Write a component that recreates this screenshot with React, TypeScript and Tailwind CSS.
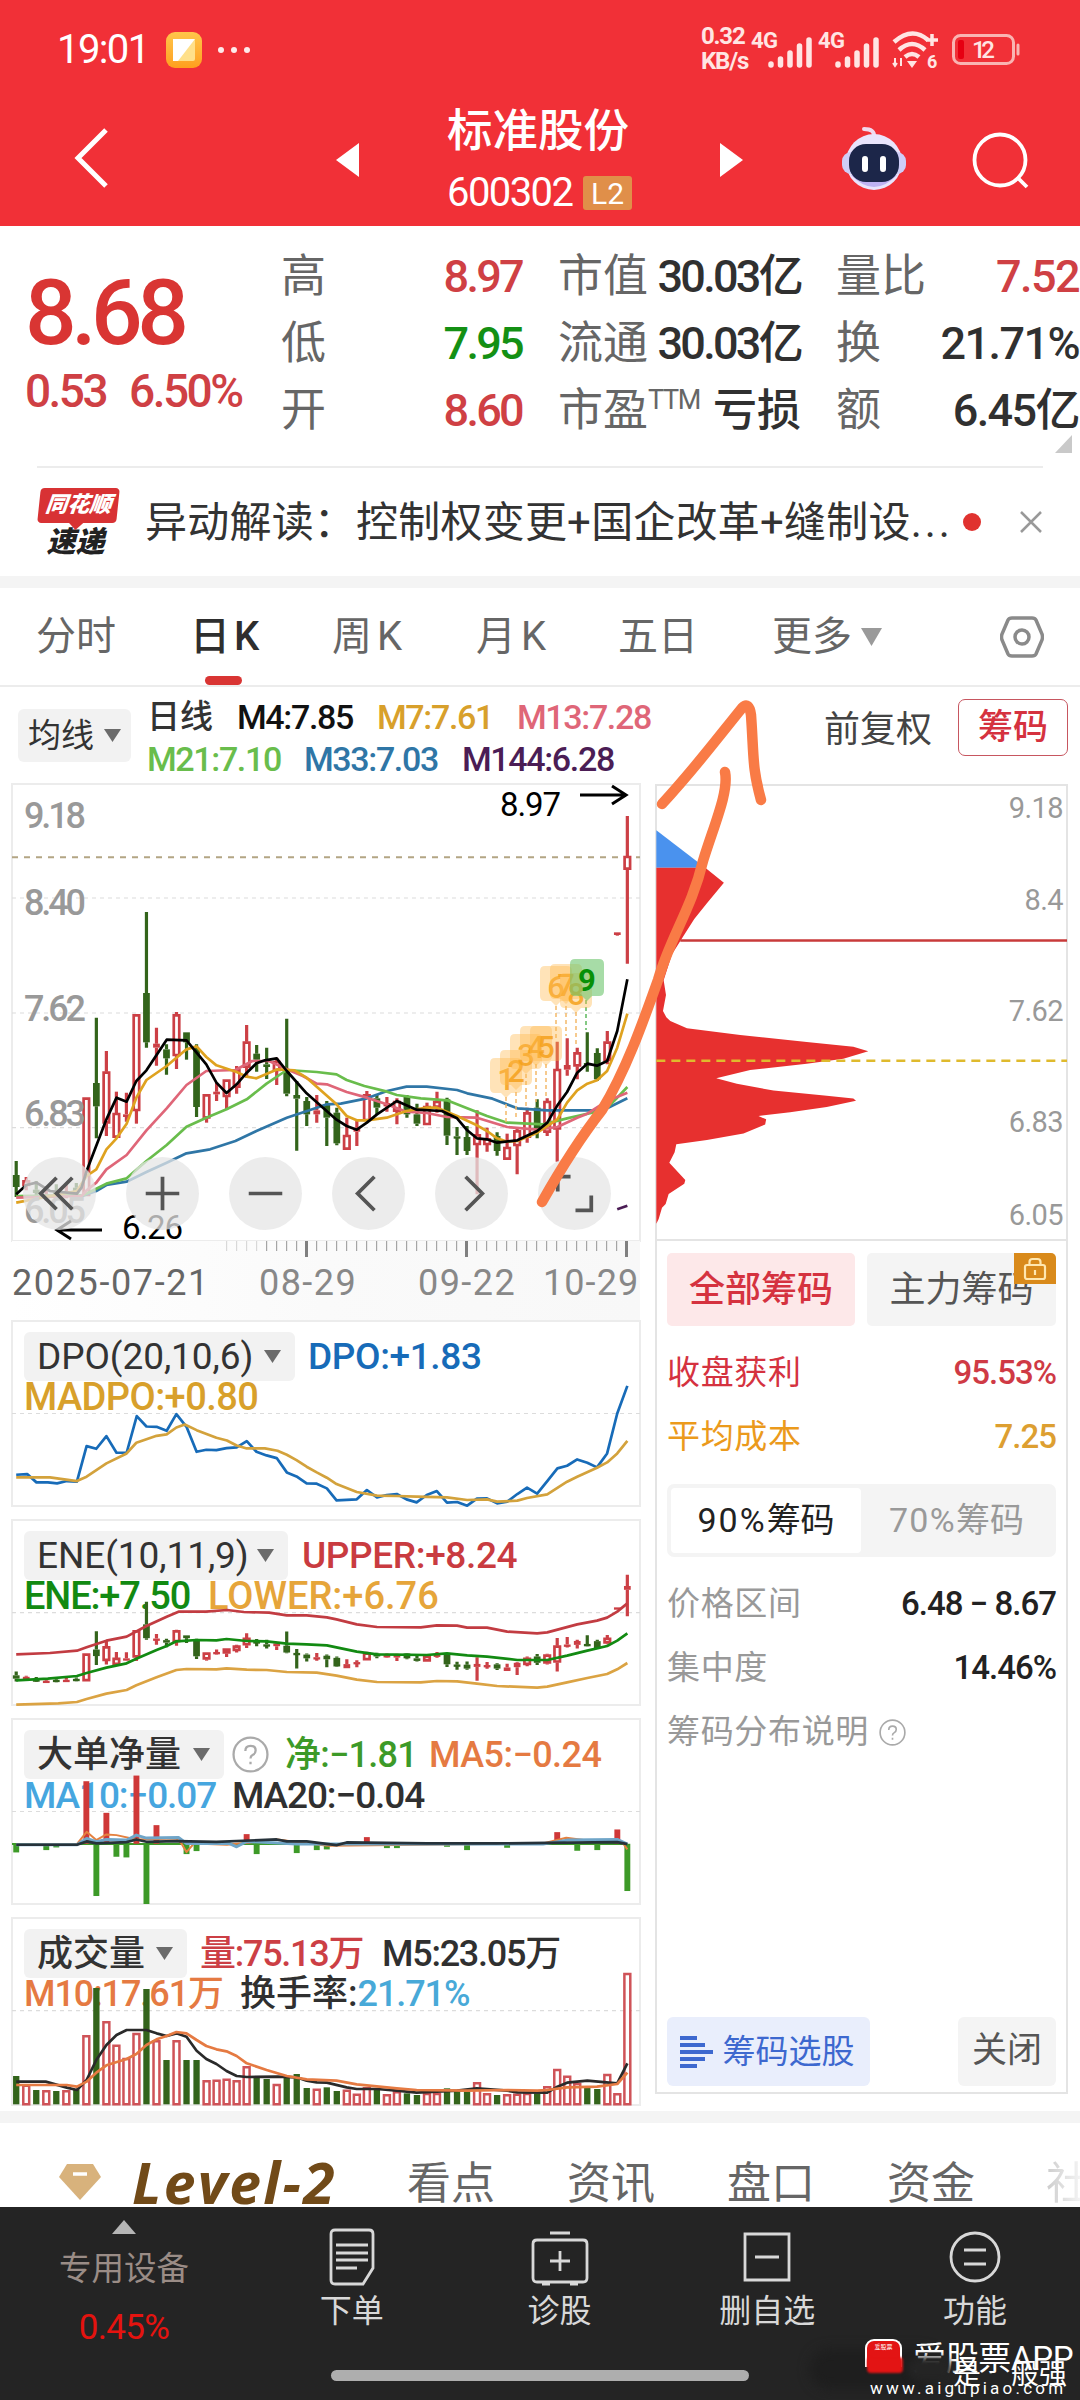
/**
 * Stock detail screen
 * Quote header, daily K chart with sub indicators and the chip distribution panel
 * @file App.tsx
 */

import React, { FC, ReactNode } from 'react';

type Candle = [kind: 'r' | 'g', high: number, top: number, bottom: number, low: number];

// One entry per trading day, in chart units (downwards)
const CANDLES: Candle[] = [
  ['g', 780, 822, 858, 888], ['r', 828, 838, 855, 868], ['g', 840, 866, 876, 890], ['r', 856, 880, 892, 900],
  ['g', 850, 870, 885, 896], ['r', 852, 870, 882, 892], ['g', 846, 860, 872, 886], ['r', 590, 590, 885, 885],
  ['g', 350, 546, 616, 712], ['r', 450, 512, 667, 705], ['r', 572, 636, 710, 710], ['r', 575, 640, 648, 662],
  ['r', 340, 340, 630, 668], ['g', 33, 276, 424, 440], ['r', 380, 428, 440, 494], ['g', 430, 445, 472, 521],
  ['r', 333, 340, 465, 504], ['g', 394, 394, 424, 476], ['g', 430, 447, 618, 648], ['r', 580, 580, 652, 665],
  ['r', 545, 572, 580, 600], ['r', 536, 536, 588, 626], ['r', 495, 505, 560, 578], ['r', 372, 422, 500, 530],
  ['g', 432, 458, 476, 512], ['g', 440, 490, 498, 534], ['r', 470, 480, 510, 552], ['g', 353, 505, 578, 586],
  ['g', 540, 582, 593, 749], ['g', 588, 600, 640, 675], ['r', 582, 628, 640, 665], ['g', 600, 612, 650, 735],
  ['g', 620, 635, 727, 733], ['r', 650, 702, 746, 746], ['r', 660, 680, 692, 735], ['r', 570, 580, 660, 660],
  ['g', 580, 592, 620, 640], ['r', 588, 606, 616, 632], ['r', 592, 600, 632, 670], ['g', 582, 588, 640, 650],
  ['g', 608, 640, 668, 675], ['r', 605, 615, 672, 672], ['r', 572, 600, 620, 635], ['g', 590, 595, 704, 732],
  ['g', 678, 706, 710, 762], ['g', 675, 708, 750, 762], ['r', 628, 700, 732, 880], ['r', 680, 712, 732, 752],
  ['g', 694, 705, 750, 764], ['r', 698, 738, 776, 776], ['r', 680, 688, 735, 820], ['r', 620, 634, 710, 725],
  ['g', 595, 620, 688, 712], ['r', 592, 600, 695, 705], ['r', 422, 504, 685, 782], ['r', 412, 492, 506, 524],
  ['r', 440, 454, 496, 535], ['g', 394, 486, 490, 512], ['g', 442, 456, 535, 540], ['r', 390, 422, 480, 490],
  ['r', 94, 94, 102, 104], ['r', -255, -135, -94, 188],
];

const VOLUMES = [
  1128, 1155, 1170, 1172, 1173, 1172, 1168, 1007, 864, 965, 1035, 1075, 1000, 867, 1022, 1080, 1022, 1080, 1080, 1142,
  1140, 1137, 1142, 1100, 1130, 1137, 1153, 1130, 1122, 1164, 1167, 1162, 1173, 1170, 1182, 1163, 1170, 1184, 1175,
  1180, 1185, 1180, 1180, 1165, 1175, 1175, 1148, 1181, 1185, 1184, 1182, 1180, 1180, 1160, 1108, 1128, 1150, 1162,
  1167, 1123, 1181, 820,
];

// [day, bar end] for days with a visible net order bar
const NET_BARS: [number, number][] = [
  [0, 457], [3, 450], [4, 442], [7, 243], [8, 588], [9, 338], [10, 470], [11, 472], [12, 226], [13, 612], [14, 375],
  [17, 462], [18, 453], [23, 402], [24, 462], [28, 459], [30, 450], [31, 448], [35, 411], [37, 444], [38, 444],
  [43, 440], [45, 450], [49, 443], [54, 396], [56, 452], [58, 450], [60, 388], [61, 573],
];

const MA_LINES = [
  { color: '#2f76a6', points: '195,886 230,870 254,852 302,842 349,813 397,785 444,757 500,745 560,720 610,690 682,650 753,620 777,610 810,608 872,592 920,570 966,557 1014,557 1086,567 1110,577 1170,593 1229,622 1300,628 1418,628 1442,622 1490,592' },
  { color: '#69bd4c', points: '40,885 200,882 254,848 302,832 349,780 397,732 444,677 491,650 539,625 587,595 634,548 682,507 753,513 800,520 824,537 866,555 920,572 943,582 1000,592 1062,598 1110,622 1157,645 1205,665 1290,670 1347,652 1371,645 1418,632 1442,620 1466,590 1490,558' },
  { color: '#df6678', points: '40,890 195,885 207,868 230,845 254,805 302,762 349,688 397,622 444,552 491,510 560,507 600,480 640,480 682,505 720,525 753,548 777,550 824,573 872,590 919,610 966,632 1014,636 1062,648 1133,650 1205,678 1276,686 1324,678 1371,650 1395,638 1442,600 1490,575' },
  { color: '#dfa21f', points: '40,905 184,870 207,825 230,805 254,745 278,712 302,668 325,590 349,537 397,495 444,445 468,436 491,468 515,493 563,513 587,527 610,532 660,505 700,508 729,530 753,557 800,610 824,645 848,658 872,658 919,650 966,630 1014,620 1038,620 1086,645 1133,673 1157,690 1181,712 1205,722 1229,720 1276,695 1324,655 1347,605 1371,568 1395,548 1418,538 1442,510 1466,440 1490,338' },
  { color: '#000', points: '40,880 64,852 88,845 120,870 184,878 195,860 207,810 254,655 278,590 302,602 325,540 349,508 397,416 444,418 468,455 491,490 515,545 539,576 563,550 587,515 610,487 630,478 658,472 682,510 729,577 800,656 824,675 848,686 872,665 896,640 943,600 990,626 1050,630 1086,652 1110,688 1133,712 1157,715 1181,725 1229,718 1276,690 1300,665 1324,613 1347,573 1371,515 1395,488 1418,494 1442,480 1466,390 1490,235' },
  { color: '#4b1d55', points: '1466,925 1490,914' },
];

const DPO = '40,524 66,522 88,547 115,547 137,550 160,543 184,545 207,438 230,446 254,408 278,458 302,458 326,348 349,379 373,380 397,392 420,342 444,380 468,455 491,449 515,450 539,444 563,442 587,423 610,455 634,466 658,474 682,517 705,529 729,550 753,551 777,565 800,601 848,598 872,570 896,592 919,585 943,582 966,598 990,607 1014,585 1038,573 1062,608 1086,606 1110,617 1133,596 1157,595 1181,610 1205,605 1229,582 1252,563 1276,581 1300,543 1324,505 1347,497 1371,478 1395,488 1418,502 1442,460 1466,340 1490,257';
const MADPO = '40,532 120,532 184,543 207,530 254,490 302,460 325,428 373,407 397,403 420,382 440,373 468,390 515,413 540,421 563,436 587,445 630,445 660,452 682,464 705,480 729,500 753,517 777,533 800,552 848,576 896,587 943,588 990,590 1062,592 1110,600 1157,598 1181,605 1229,602 1252,594 1300,583 1347,545 1371,530 1418,503 1442,487 1466,460 1490,422';
const ENE_UPPER = '40,1063 120,1059 184,1052 207,1042 254,1022 302,1010 349,978 397,950 425,935 490,935 540,930 580,936 640,938 682,946 729,946 777,952 800,958 848,973 896,981 1000,982 1038,976 1086,977 1110,983 1157,983 1205,995 1276,1000 1300,997 1371,973 1418,962 1442,953 1466,935 1490,910';
const ENE_MID = '40,1141 115,1136 184,1128 207,1119 254,1103 302,1090 325,1076 373,1050 397,1038 420,1024 468,1020 515,1021 539,1017 587,1023 634,1024 682,1031 729,1033 777,1036 848,1055 896,1063 1014,1065 1062,1060 1110,1066 1157,1070 1229,1080 1300,1080 1347,1067 1395,1052 1442,1038 1466,1022 1490,1000';
const ENE_LOWER = '40,1214 140,1210 184,1206 207,1197 254,1181 302,1170 325,1156 373,1132 420,1110 444,1107 515,1108 539,1105 587,1109 634,1110 682,1116 753,1118 800,1127 848,1139 896,1146 1000,1147 1038,1143 1086,1144 1133,1151 1181,1158 1276,1163 1300,1160 1347,1147 1395,1134 1442,1122 1466,1108 1490,1089';
const VOL_M5 = '40,1145 110,1145 160,1163 184,1170 207,1140 230,1080 254,1035 278,1005 302,990 349,990 373,1000 397,1008 420,1000 444,1010 468,1052 491,1077 515,1092 539,1113 563,1128 587,1131 660,1130 705,1132 729,1142 753,1147 777,1148 824,1162 848,1167 896,1167 943,1172 990,1178 1086,1172 1133,1165 1205,1172 1229,1177 1300,1178 1324,1160 1347,1148 1395,1142 1466,1150 1490,1090';
const VOL_M10 = '40,1155 160,1155 184,1160 207,1145 230,1118 254,1096 302,1077 325,1062 349,1035 373,1018 397,1008 420,996 444,1000 468,1020 491,1038 515,1048 539,1054 563,1068 587,1090 634,1110 682,1128 729,1138 800,1142 848,1153 943,1165 990,1170 1110,1172 1205,1170 1276,1172 1300,1170 1347,1162 1418,1160 1466,1152 1490,1118';
const CHIPS = '48,506 195,506 251,547 200,602 162,645 130,690 95,740 70,810 77,850 68,893 78,910 90,920 140,940 300,958 500,977 640,990 685,1002 610,1022 500,1036 330,1053 228,1075 290,1090 400,1108 560,1122 640,1130 648,1136 560,1153 450,1167 355,1177 378,1186 375,1200 310,1224 200,1242 108,1253 103,1275 87,1303 135,1350 132,1360 85,1388 76,1415 65,1425 55,1455 48,1468';

const xAt = (day: number) => 40 + day * 23.77;

const colorOf = (kind: 'r' | 'g') => (kind === 'r' ? '#cc3f45' : '#33641b');

const Num: FC<{ children: ReactNode; className?: string }> = ({ children, className = '' }) => (
  <span className={`whitespace-pre ${className.includes('tracking') ? '' : 'tracking-[-0.04em]'} ${className}`}>
    {children}
  </span>
);

/** Down pointing arrow of a select */
const Caret: FC = () => (
  <svg viewBox="0 0 17 13" className="w-[17px] h-[13px] shrink-0">
    <path d="M0 0h17L8.5 13z" fill="#6b6b6b" />
  </svg>
);

/** Bordered chart frame. The drawing keeps its own unit system and stretches to the frame */
const Plot: FC<{ viewBox: string; height: string; children: ReactNode; legend?: ReactNode }> = ({
  viewBox,
  height,
  children,
  legend,
}) => (
  <div className={`relative w-[628px] shrink-0 outline-2 -outline-offset-1 outline-[#ececec] ${height}`}>
    <div className="relative">{legend}</div>
    <svg viewBox={viewBox} preserveAspectRatio="none" className="absolute inset-0 w-full h-full overflow-visible">
      {children}
    </svg>
  </div>
);

const Line: FC<{ points: string; color: string; width?: number }> = ({ points, color, width = 2.7 }) => (
  <polyline
    points={points}
    fill="none"
    stroke={color}
    strokeWidth={width}
    strokeLinejoin="round"
    vectorEffect="non-scaling-stroke"
  />
);

const GridLine: FC<{ y: number; color?: string; dash?: string; width?: number }> = ({
  y,
  color = '#dcdcdc',
  dash = '4 4',
  width = 1.2,
}) => (
  <path
    d={`M30 ${y}H1520`}
    stroke={color}
    strokeWidth={width}
    strokeDasharray={dash}
    vectorEffect="non-scaling-stroke"
  />
);

const CandleShape: FC<{ day: number; candle: Candle; scale?: (v: number) => number }> = ({
  day,
  candle,
  scale = (v) => v,
}) => {
  const [kind, ...values] = candle;
  const [high, top, bottom, low] = values.map(scale);
  const x = xAt(day);
  const color = colorOf(kind);
  const hollow = kind === 'r' && bottom - top > 14;

  return (
    <g stroke={color}>
      <path d={`M${x} ${high}V${top}M${x} ${bottom}V${low}`} strokeWidth="3.2" vectorEffect="non-scaling-stroke" />
      {hollow ? (
        <rect
          x={x - 6.5}
          y={top + 3}
          width="13"
          height={bottom - top - 6}
          fill="#fff"
          strokeWidth="2.7"
          vectorEffect="non-scaling-stroke"
        />
      ) : (
        <rect x={x - 8} y={top} width="16" height={Math.max(bottom - top, 7)} fill={color} stroke="none" />
      )}
    </g>
  );
};

const StatusBar: FC = () => (
  <div className="h-[100px] pl-[57px] pr-[60px] flex items-center">
    <Num className="text-[40px] w-[93px]">19:01</Num>
    <div className="ml-[16px] w-[36px] h-[36px] rounded-[9px] bg-gradient-to-b from-[#ffc64a] to-[#ff9f1c] p-[7px]">
      <svg viewBox="0 0 22 22" className="w-[22px] h-[22px]">
        <rect width="22" height="22" rx="2" fill="#ffe08a" />
        <path d="M0 0H22L5 22H0z" fill="#fff" />
      </svg>
    </div>
    <div className="ml-[16px] flex gap-[7px]">
      <i className="w-[6px] h-[6px] rounded-full bg-white/90" />
      <i className="w-[6px] h-[6px] rounded-full bg-white/90" />
      <i className="w-[6px] h-[6px] rounded-full bg-white/90" />
    </div>
    <div className="ml-auto flex items-center font-bold text-[#ffe5e3]">
      <div className="w-[50px] text-[24px] leading-[25px] tracking-[-0.05em] -mt-[2px]">
        <div>0.32</div>
        <div>KB/s</div>
      </div>
      <Signal />
      <Signal />
      <svg viewBox="0 0 50 40" className="w-[50px] h-[40px] ml-[6px] overflow-visible" fill="none" stroke="#ffe5e3" strokeWidth="4.5">
        <path d="M3 12Q21-4 37 10M8 20Q21 8 34 20M14 27Q21 21 28 27" />
        <path d="M41 4v12M35 10h12" strokeWidth="3.5" />
        <path d="M16 31h10l-5 7z" fill="#ffe5e3" stroke="none" />
        <path d="M4 28v8M10 36v-8M2 33l2 3 2-3" strokeWidth="2" />
        <text x="36" y="38" fontSize="18" fontWeight="700" fill="#ffe5e3" stroke="none">6</text>
      </svg>
      <svg viewBox="0 0 68 32" className="w-[68px] h-[32px] ml-[11px] overflow-visible">
        <rect x="1.5" y="1.5" width="60" height="28" rx="7" fill="none" stroke="#f9b4b2" strokeWidth="3" />
        <rect x="6" y="6" width="6" height="19" rx="2" fill="#e60012" />
        <path d="M66 11v9" stroke="#f9b4b2" strokeWidth="3" strokeLinecap="round" />
        <text x="20" y="24" fontSize="24" fontWeight="500" fill="#ffe5e3" textLength="23">12</text>
      </svg>
    </div>
  </div>
);

const Signal: FC = () => (
  <svg viewBox="0 0 67 38" className="w-[67px] h-[38px] overflow-visible" stroke="#ffe5e3" strokeWidth="5.500" strokeLinecap="round">
    <text x="0" y="17" fontSize="22" fontWeight="700" fill="#ffe5e3" stroke="none" textLength="27">4G</text>
    <path d="M20 34v-1M29.500 34v-6M39 34V22M48.500 34V15M58 34V9" />
  </svg>
);

const TitleBar: FC = () => (
  <div className="h-[120px] flex items-center pl-[73px] pr-[50px]">
    <svg viewBox="0 0 36 60" className="w-[36px] h-[60px] -mt-[4px]" fill="none" stroke="#fff" strokeWidth="5">
      <path d="M33 2L5 30L33 58" />
    </svg>
    <svg viewBox="0 0 23 34" className="w-[23px] h-[34px] ml-[227px]">
      <path d="M23 0v34L0 17z" fill="#fff" />
    </svg>
    <div className="w-[188px] ml-[88px] mt-[5px]">
      <div className="text-[45.500px] leading-[60px] font-medium">标准股份</div>
      <div className="flex items-center justify-between pr-[3px]">
        <Num className="text-[40px] leading-[62px]">600302</Num>
        <span className="w-[49px] h-[34px] rounded-[3px] bg-[#e08f49] text-[30px] leading-[35px] text-center">L2</span>
      </div>
    </div>
    <svg viewBox="0 0 23 34" className="w-[23px] h-[34px] ml-[85px]">
      <path d="M0 0v34l23-17z" fill="#fff" />
    </svg>
    <svg viewBox="0 0 66 66" className="w-[66px] h-[66px] ml-[98px] -mt-[4px]">
      <path d="M33 12Q34 4 23 4" stroke="#f1d9ee" strokeWidth="4" fill="none" strokeLinecap="round" />
      <circle cx="33" cy="37" r="28" fill="#e9e4fc" />
      <rect x="1" y="27" width="64" height="22" rx="9" fill="#cfcdf8" />
      <path d="M10 50Q33 74 56 50Z" fill="#beb2f2" />
      <rect x="8" y="19" width="50" height="38" rx="17" fill="#1c2649" />
      <path d="M24 34v10M42 34v10" stroke="#fff" strokeWidth="6" strokeLinecap="round" />
    </svg>
    <svg viewBox="0 0 58 58" className="w-[58px] h-[58px] ml-auto" fill="none" stroke="#fff" strokeWidth="3.800">
      <circle cx="28" cy="29" r="25.500" />
      <path d="M45 46L55 56" />
    </svg>
  </div>
);

const QUOTE_ROWS = [
  [['高', '8.97', 'text-[#cf4044]'], ['市值', '30.03亿', 'text-[#303030]'], ['量比', '7.52', 'text-[#cf4044]']],
  [['低', '7.95', 'text-[#149014]'], ['流通', '30.03亿', 'text-[#303030]'], ['换', '21.71%', 'text-[#303030]']],
  [['开', '8.60', 'text-[#cf4044]'], ['市盈', '亏损', 'text-[#303030]'], ['额', '6.45亿', 'text-[#303030]']],
];

const QuotePanel: FC = () => (
  <section className="relative h-[240px] flex overflow-hidden">
    <div className="w-[281px] pl-[25px] pt-[32px] text-[#d93533]">
      <div className="text-[91px] leading-[110px] font-medium tracking-[-0.06em]">8.68</div>
      <div className="flex gap-[23px] text-[46px] leading-[46px] font-medium text-[#cf4044]">
        <Num className="tracking-[-0.055em]">0.53</Num>
        <Num className="tracking-[-0.055em]">6.50%</Num>
      </div>
    </div>
    <div className="flex-1 pt-[17px]">
      {QUOTE_ROWS.map((row) => (
        <div key={row[0][0]} className="flex h-[67px] items-center text-[45px]">
          {row.map(([label, value, color], col) => (
            <div
              key={label}
              className={`flex justify-between items-center whitespace-nowrap ${
                col === 0 ? 'w-[241px]' : col === 1 ? 'w-[243px] ml-[36px]' : 'w-[243px] ml-[35px]'
              }`}
            >
              <span className="text-[#666] flex">
                {label}
                {label === '市盈' && <sup className="text-[27px] mt-[15px] leading-[44px] tracking-[-0.05em]">TTM</sup>}
              </span>
              <span
                className={`font-medium ${value === '亏损' ? 'text-[44px]' : col === 2 ? 'tracking-[-0.035em]' : 'tracking-[-0.06em]'} ${color}`}
              >
                {value}
              </span>
            </div>
          ))}
        </div>
      ))}
    </div>
    <svg viewBox="0 0 17 18" className="absolute right-[8px] bottom-[13px] w-[17px] h-[18px]">
      <path d="M17 0v18H0z" fill="#c9c9c9" />
    </svg>
  </section>
);

const NewsBar: FC = () => (
  <section className="h-[110px] mx-[37px] border-t-2 border-[#ececec] flex items-center">
    <div className="w-[84px] pb-[2px] text-center font-black italic">
      <div className="relative w-[79px] h-[35px] ml-[2px] mt-[2px] -skew-x-6 rounded-[4px] bg-[#d83234] text-white text-[22px] leading-[34px]">
        同花顺
        <i className="absolute left-[34px] -bottom-[5px] w-[10px] h-[10px] rotate-45 bg-[#d83234]" />
      </div>
      <div className="text-[29px] leading-[30px] mt-[4px] -ml-[7px] text-[#222]">速递</div>
    </div>
    <div className="ml-[24px] text-[42px] tracking-[0.005em] text-[#333] whitespace-nowrap w-[808px]">
      异动解读：控制权变更+国企改革+缝制设<span className="tracking-[0.07em]">...</span>
    </div>
    <i className="ml-[10px] w-[18px] h-[18px] rounded-full bg-[#e0322f] shrink-0" />
    <svg viewBox="0 0 22 22" className="ml-[39px] w-[22px] h-[22px]" stroke="#999" strokeWidth="2.500">
      <path d="M1 1L21 21M21 1L1 21" />
    </svg>
  </section>
);

const PeriodTabs: FC = () => (
  <nav className="h-[99px] border-b-2 border-[#ececec] flex items-center text-[40px] text-[#666] whitespace-nowrap">
    <span className="ml-[36px] w-[154px]">分时</span>
    <span className="relative w-[142px] font-medium text-[#2e2e2e] h-full flex items-center">
      日<span className="ml-[4px]">K</span>
      <i className="absolute left-[15px] bottom-0 w-[37px] h-[9px] rounded-full bg-[#d93533]" />
    </span>
    <span className="w-[144px]">周<span className="ml-[5px]">K</span></span>
    <span className="w-[142px]">月<span className="ml-[5px]">K</span></span>
    <span className="w-[154px]">五日</span>
    <span className="flex items-center gap-[9px]">
      更多
      <svg viewBox="0 0 20 17" className="w-[21px] h-[18px]"><path d="M0 0h20L10 17z" fill="#9a9a9a" /></svg>
    </span>
    <svg viewBox="0 0 44 44" className="ml-auto mr-[36px] w-[44px] h-[44px]" fill="none" stroke="#8a8a8a" strokeWidth="3.500">
      <path d="M12 3h20q3 0 4 2l6 14q1 3 0 6l-6 14q-1 2-4 2H12q-3 0-4-2L2 25q-1-3 0-6L8 5q1-2 4-2z" />
      <circle cx="22" cy="22" r="7" />
    </svg>
  </nav>
);

const ChartToolbar: FC = () => (
  <div className="h-[97px] flex pl-[18px] pr-[12px]">
    <button className="mt-[22px] w-[113px] h-[53px] rounded-[6px] bg-[#f2f2f2] flex items-center justify-center gap-[10px] text-[33px] text-[#333]">
      均线
      <Caret />
    </button>
    <div className="ml-[16px] pt-[9px] text-[34px] leading-[42px] font-medium">
      <div className="flex">
        <span className="text-[33px] w-[90px] text-[#333]">日线</span>
        <Num className="w-[140px] text-[#111]">M4:7.85</Num>
        <Num className="w-[140px] text-[#d8a02b]">M7:7.61</Num>
        <Num className="text-[#df6678]">M13:7.28</Num>
      </div>
      <div className="flex">
        <Num className="w-[157px] text-[#69bd4c]">M21:7.10</Num>
        <Num className="w-[158px] text-[#2f76a6]">M33:7.03</Num>
        <Num className="text-[#4b1d55]">M144:6.28</Num>
      </div>
    </div>
    <div className="ml-auto mt-[12px] h-[57px] flex items-center">
      <span className="text-[36px] text-[#444] mr-[26px] mt-[5px]">前复权</span>
      <button className="w-[110px] h-[57px] rounded-[7px] border-[1.500px] border-[#c75660] text-[35px] leading-[52px] text-[#d5323f] font-medium">
        筹码
      </button>
    </div>
  </div>
);

// Counter marks above the last candles, in pixels of the chart frame
const MARKS = [
  { n: 1, x: 494, y: 293 }, { n: 2, x: 504, y: 285 }, { n: 3, x: 514, y: 269 }, { n: 4, x: 524, y: 261 },
  { n: 5, x: 534, y: 261 }, { n: 6, x: 544, y: 201 }, { n: 7, x: 554, y: 199 }, { n: 8, x: 564, y: 208 },
];

const ICON_PATHS = [
  'M34 21L18 37L34 53M50 21L34 37L50 53',
  'M37 20V54M20 37H54',
  'M20 37H54',
  'M43 20L26 37L43 54',
  'M31 20L48 37L31 54',
  'M20 35V20H33M54 39V54H38',
];

const MainChart: FC = () => (
  <div className="relative">
    <Plot viewBox="30 -351 1490 1371" height="h-[457px]">
      <GridLine y={-9} />
      <GridLine y={336} />
      <GridLine y={680} />
      <GridLine y={-131} color="#b3a584" dash="6 6" width={2} />
      {CANDLES.map((candle, day) => (
        <CandleShape key={day} day={day} candle={candle} />
      ))}
      {MA_LINES.map((line) => (
        <Line key={line.color} {...line} />
      ))}
    </Plot>
    <svg viewBox="0 0 628 457" className="absolute inset-0 w-full h-full overflow-visible" fontFamily="Roboto">
      <g fontSize="36" fontWeight="500" fill="#999">
        <text x="12" y="44" textLength="62">9.18</text>
        <text x="12" y="131" textLength="62">8.40</text>
        <text x="12" y="237" textLength="62">7.62</text>
        <text x="12" y="342" textLength="62">6.83</text>
        <text x="12" y="439" textLength="62">6.05</text>
      </g>
      <text x="488" y="32" fontSize="33" textLength="61">8.97</text>
      <text x="110" y="455" fontSize="33" textLength="61">6.26</text>
      <g fill="none" stroke="#000" strokeWidth="3">
        <path d="M568 11H614M600 2L614 11L600 20" />
        <path d="M90 446H45M59 437L45 446L59 455" />
      </g>
      <g strokeWidth="1.500" strokeDasharray="4 3" stroke="#f3b96a">
        <path d="M494 313V340M504 308V334M514 290V324M524 280V318M534 280V314M544 222V256M554 222V252M564 228V260" />
        <path d="M574 216V246" stroke="#5cb85c" />
      </g>
      {MARKS.map(({ n, x, y }) => (
        <g key={n}>
          <path
            d={`M${x - 11} ${y - 19}h22q5 0 5 5v25q0 5-5 5h-6l-5 5l-5-5h-6q-5 0-5-5v-25q0-5 5-5z`}
            fill="#ffb84d"
            opacity="0.4"
          />
          <text x={x} y={y + 13} fontSize="31" fontWeight="500" fill="#f5a11c" fillOpacity="0.85" textAnchor="middle">
            {n}
          </text>
        </g>
      ))}
      <path d="M563 175h24q5 0 5 5v27q0 5-5 5h-7l-5 5l-5-5h-7q-5 0-5-5v-27q0-5 5-5z" fill="#6cc46c" opacity="0.6" />
      <text x="575" y="207" fontSize="31" fontWeight="700" fill="#079007" textAnchor="middle">9</text>
    </svg>
    <div className="absolute left-[11px] top-[373px] flex gap-[30px]">
      {ICON_PATHS.map((d) => (
        <button key={d} className="w-[73px] h-[73px] rounded-full bg-[#e6e6e6]/75">
          <svg viewBox="0 0 74 74" fill="none" stroke="#555" strokeWidth="3.800">
            <path d={d} />
          </svg>
        </button>
      ))}
    </div>
  </div>
);

const DateAxis: FC = () => (
  <div className="relative h-[80px] w-[628px] bg-gradient-to-r from-white via-[#fafafa] to-[#f8f8f8] text-[36px] text-[#888]">
    <svg viewBox="0 0 628 16" className="absolute top-0 left-0 w-[628px] h-[16px]">
      {Array.from({ length: 41 }, (_, i) => {
        const major = i === 8 || i === 24 || i === 40;
        return (
          <rect
            key={i}
            x={214.500 + i * 10 - (major ? 1.5 : 0.5)}
            width={major ? 3 : 1.2}
            height={major ? 16 : 10}
            fill={major ? '#808080' : '#a5a5a5'}
            opacity={i < 4 ? 0.4 : 1}
          />
        );
      })}
    </svg>
    <div className="flex pt-[22px] leading-[40px]">
      <span className="w-[247px] text-[#666] tracking-[0.045em]">2025-07-21</span>
      <span className="w-[159px] tracking-[0.04em]">08-29</span>
      <span className="w-[125px] tracking-[0.04em]">09-22</span>
      <span className="tracking-[0.03em]">10-29</span>
    </div>
  </div>
);

const LegendButton: FC<{ children: ReactNode; width: string }> = ({ children, width }) => (
  <span className={`h-[49px] rounded-[6px] bg-[#f2f2f2] flex items-center justify-between pl-[13px] pr-[14px] text-[#333] ${width}`}>
    {children}
    <Caret />
  </span>
);

const Help: FC<{ className: string }> = ({ className }) => (
  <svg viewBox="0 0 36 36" className={className} fill="none" stroke="#aaa" strokeWidth="2.200">
    <circle cx="18" cy="18" r="16.500" />
    <path d="M13 14.500q0-5 5-5t5 4.500q0 3-3 4.500q-2 1-2 3.500M18 25v2.500" />
  </svg>
);

const Indicators: FC = () => (
  <div className="flex flex-col gap-[14px] text-[36px] font-medium">
    <Plot
      viewBox="30 62 1490 556"
      height="h-[185px]"
      legend={
        <div className="pl-[12px] pt-[11px]">
          <div className="flex h-[49px] items-center">
            <LegendButton width="w-[271px]">
              <Num className="text-[37px] font-normal tracking-[-0.002em]">DPO(20,10,6)</Num>
            </LegendButton>
            <Num className="ml-[13px] text-[37px] tracking-[-0.01em] text-[#176bb8]">DPO:+1.83</Num>
          </div>
          <Num className="block text-[38px] tracking-[-0.015em] leading-[33px] text-[#d8a02b]">MADPO:+0.80</Num>
        </div>
      }
    >
      <GridLine y={340} />
      <Line points={DPO} color="#176bb8" />
      <Line points={MADPO} color="#d3a23c" />
    </Plot>
    <Plot
      viewBox="30 660 1490 555"
      height="h-[185px]"
      legend={
        <div className="pl-[12px] pt-[11px]">
          <div className="flex h-[49px] items-center">
            <LegendButton width="w-[264px]">
              <Num className="text-[37px] font-normal tracking-[-0.002em]">ENE(10,11,9)</Num>
            </LegendButton>
            <Num className="ml-[14px] text-[37px] tracking-[-0.01em] text-[#c93b40]">UPPER:+8.24</Num>
          </div>
          <div className="flex text-[38px] leading-[33px]">
            <Num className="w-[184px] tracking-[-0.03em] text-[#128a12]">ENE:+7.50</Num>
            <Num className="tracking-[0] text-[#e6a53a]">LOWER:+6.76</Num>
          </div>
        </div>
      }
    >
      <GridLine y={938} />
      {CANDLES.map((candle, day) => (
        <CandleShape key={day} day={day} candle={candle} scale={(v) => 905 + (v - 33) * 0.28} />
      ))}
      <Line points={ENE_UPPER} color="#c23c42" />
      <Line points={ENE_MID} color="#128a12" />
      <Line points={ENE_LOWER} color="#dba343" />
    </Plot>
    <Plot
      viewBox="30 56 1490 556"
      height="h-[185px]"
      legend={
        <div className="pl-[12px] pt-[11px]">
          <div className="flex h-[49px] items-center">
            <LegendButton width="w-[200px]"><span>大单净量</span></LegendButton>
            <Help className="w-[37px] h-[37px] ml-[8px]" />
            <Num className="ml-[16px] w-[144px] tracking-[-0.02em] text-[#3d9a28]">净:−1.81</Num>
            <Num className="tracking-[-0.015em] text-[#e57a42]">MA5:−0.24</Num>
          </div>
          <div className="flex text-[37px] leading-[33px]">
            <Num className="w-[208px] tracking-[-0.03em] text-[#46a6df]">MA10:−0.07</Num>
            <Num className="tracking-[-0.03em] text-[#303030]">MA20:−0.04</Num>
          </div>
        </div>
      }
    >
      <GridLine y={334} />
      <path d="M30 432H1490" stroke="#3d9a28" strokeWidth="2" vectorEffect="non-scaling-stroke" />
      {NET_BARS.map(([day, end]) => (
        <rect
          key={day}
          x={xAt(day) - 7}
          y={Math.min(end, 431)}
          width="14"
          height={Math.abs(end - 431)}
          fill={end < 431 ? '#cf3838' : '#3d9a28'}
        />
      ))}
      <Line points="40,433 184,432 207,395 230,420 254,403 278,405 325,418 420,415 432,430 444,456 462,430 540,434 660,418 700,425 780,437 1290,430 1345,413 1400,422 1466,420 1480,430 1490,448" color="#e5813f" width={2} />
      <Line points="40,434 184,434 207,415 230,425 254,418 302,420 325,405 349,414 425,412 444,430 545,430 563,440 587,424 705,432 1290,432 1347,420 1466,418 1490,432" color="#6fa5c8" width={3} />
      <Line points="40,434 184,434 207,424 230,430 302,426 325,418 349,425 420,423 515,425 658,418 682,424 729,424 800,435 824,427 1014,430 1180,430 1300,428 1466,426 1490,432" color="#26323a" />
    </Plot>
    <Plot
      viewBox="30 654 1490 561"
      height="h-[187px]"
      legend={
        <div className="pl-[12px] pt-[11px]">
          <div className="flex h-[49px] items-center">
            <LegendButton width="w-[163px]"><span>成交量</span></LegendButton>
            <Num className="ml-[13px] w-[182px] tracking-[-0.035em] text-[#cc3f45]">量:75.13万</Num>
            <Num className="tracking-[-0.035em] text-[#303030]">M5:23.05万</Num>
          </div>
          <div className="flex leading-[33px]">
            <Num className="w-[216px] tracking-[-0.03em] text-[#e57a42]">M10:17.61万</Num>
            <span className="text-[#303030]">换手率:</span>
            <Num className="tracking-[-0.03em] text-[#48a9d8]">21.71%</Num>
          </div>
        </div>
      }
    >
      <GridLine y={932} />
      {VOLUMES.map((top, day) =>
        CANDLES[day][0] === 'g' ? (
          <rect key={day} x={xAt(day) - 7.5} y={top} width="15" height={1213 - top} fill="#33641b" />
        ) : (
          <rect
            key={day}
            x={xAt(day) - 7}
            y={top + 2}
            width="14"
            height={1211 - top}
            fill="#fff"
            stroke="#cf5358"
            strokeWidth="2.500"
            vectorEffect="non-scaling-stroke"
          />
        ),
      )}
      <Line points={VOL_M5} color="#2a2a2a" />
      <Line points={VOL_M10} color="#e57a42" />
    </Plot>
  </div>
);

const ChipChart: FC = () => (
  <div className="relative h-[455px] border-b-2 border-[#e4e4e4]">
    <svg viewBox="47 280 1235 1232" preserveAspectRatio="none" className="absolute -top-[2px] -left-px w-[411px] h-[456px]">
      <path d="M48 405L195 506H48z" fill="#4a92ee" />
      <polygon points={CHIPS} fill="#e7302f" />
      <path d="M120 703H1282" stroke="#c83a3a" strokeWidth="2.500" vectorEffect="non-scaling-stroke" />
      <path d="M48 1028H1282" stroke="#dfba2d" strokeWidth="2.500" strokeDasharray="9 6" vectorEffect="non-scaling-stroke" />
    </svg>
    <div className="relative flex flex-col items-end pr-[3px] text-[29px] leading-[30px] tracking-[-0.02em] text-[#999]">
      <span className="mt-[7px]">9.18</span>
      <span className="mt-[62px]">8.4</span>
      <span className="mt-[81px]">7.62</span>
      <span className="mt-[81px]">6.83</span>
      <span className="mt-[63px]">6.05</span>
    </div>
  </div>
);

const ChipRow: FC<{ label: ReactNode; value?: string; labelColor?: string; valueColor?: string }> = ({
  label,
  value,
  labelColor = 'text-[#999]',
  valueColor = 'text-[#222]',
}) => (
  <div className="h-[64px] flex items-center justify-between text-[33px]">
    <span className={`flex items-center gap-[10px] tracking-[0.02em] ${labelColor}`}>{label}</span>
    {value && <Num className={`font-medium tracking-[-0.03em] ${valueColor}`}>{value}</Num>}
  </div>
);

const ChipPanel: FC = () => (
  <aside className="w-[413px] h-[1310px] border-2 border-[#e4e4e4] flex flex-col">
    <ChipChart />
    <div className="flex-1 flex flex-col px-[10px] pt-[12px] pb-[6px]">
      <div className="flex justify-between text-[36px]">
        <button className="w-[188px] h-[73px] rounded-[5px] bg-[#fde8e9] text-[#d5323f] font-medium">全部筹码</button>
        <button className="relative w-[189px] h-[73px] rounded-[5px] bg-[#f4f4f4] text-[#555]">
          主力筹码
          <span className="absolute right-0 top-0 w-[42px] h-[31px] rounded-tr-[5px] bg-[#d98a1b] flex items-center justify-center">
            <svg viewBox="0 0 24 26" className="w-[24px] h-[26px]" fill="none" stroke="#ffe7b0" strokeWidth="2.200">
              <rect x="2" y="9" width="20" height="14" rx="2" />
              <path d="M6.500 9V6q0-3 3-3h5q3 0 3 3v3M12 14v5" />
            </svg>
          </span>
        </button>
      </div>
      <div className="mt-[15px]">
        <ChipRow label="收盘获利" value="95.53%" labelColor="text-[#d5323f]" valueColor="text-[#cf3a45]" />
        <ChipRow label="平均成本" value="7.25" labelColor="text-[#eb9a1c]" valueColor="text-[#dd9f31]" />
      </div>
      <div className="mt-[15px] h-[73px] rounded-[7px] bg-[#f4f4f4] p-[4px] flex text-[34px]">
        <span className="w-[190px] bg-white rounded-[4px] text-[#222] flex items-center justify-center">
          <span className="tracking-[0.06em]">90%</span>筹码
        </span>
        <span className="flex-1 text-[#999] flex items-center justify-center">
          <span className="tracking-[0.04em]">70%</span>筹码
        </span>
      </div>
      <div className="mt-[15px]">
        <ChipRow label="价格区间" value="6.48 − 8.67" />
        <ChipRow label="集中度" value="14.46%" />
        <ChipRow label={<>筹码分布说明<Help className="w-[27px] h-[27px]" /></>} />
      </div>
      <div className="mt-auto flex justify-between">
        <button className="w-[203px] h-[69px] rounded-[6px] bg-[#e9eefc] text-[33px] text-[#3d68cf] flex items-center justify-center gap-[10px] pr-[3px]">
          <svg viewBox="0 0 33 32" className="w-[33px] h-[32px]" fill="#3d68cf">
            <path d="M0 0h17v4H0zM0 7h25v4H0zM0 14h33v4H0zM0 21h25v4H0zM0 28h17v4H0z" />
          </svg>
          筹码选股
        </button>
        <button className="w-[98px] h-[69px] rounded-[6px] bg-[#f4f4f4] text-[35px] text-[#555]">关闭</button>
      </div>
    </div>
  </aside>
);

const SectionTabs: FC = () => (
  <div className="h-[84px] overflow-hidden flex items-start whitespace-nowrap text-[44px] leading-[60px] text-[#666]">
    <svg viewBox="0 0 42 36" className="ml-[59px] mt-[41px] w-[42px] h-[36px] shrink-0">
      <path d="M8 0h26l8 13L21 36L0 13z" fill="#d8b27c" />
      <path d="M14 10h14" stroke="#fff" strokeWidth="3.500" />
    </svg>
    <span className="ml-[31px] mt-[29px] w-[275px] shrink-0 text-[57px] font-bold italic tracking-[0.04em] text-[#714a18] [font-family:'Open_Sans',sans-serif]">
      Level-2
    </span>
    <span className="mt-[31px] w-[160px] shrink-0">看点</span>
    <span className="mt-[31px] w-[160px] shrink-0">资讯</span>
    <span className="mt-[31px] w-[160px] shrink-0">盘口</span>
    <span className="mt-[31px] w-[159px] shrink-0">资金</span>
    <span className="mt-[31px] shrink-0 bg-gradient-to-r from-[#ccc] to-white bg-clip-text text-transparent">社</span>
  </div>
);

const NAV_ITEMS = [
  {
    label: '下单',
    icon: <path d="M12 3h34q4 0 4 4v34L40 57H12q-4 0-4-4V7q0-4 4-4zM13 18H45M13 26H45M13 33H45M13 41H34" />,
  },
  {
    label: '诊股',
    icon: <path d="M6 13H52q4 0 4 4v34q0 4-4 4H6q-4 0-4-4V17q0-4 4-4zM29 24V44M19 34H39M19 6H39M11 57h8M39 57h8" />,
  },
  { label: '删自选', icon: <path d="M7 7H51V53H7zM17 30H41" /> },
  { label: '功能', icon: <path d="M5 30a24 24 0 1 0 48 0a24 24 0 1 0-48 0zM18 23H40M18 37H40" /> },
];

const BottomBar: FC = () => (
  <footer className="relative h-[194px] bg-[#242424] flex overflow-hidden">
    <div className="w-[248px] pt-[13px] flex flex-col items-center text-[32.500px]">
      <svg viewBox="0 0 24 14" className="w-[24px] h-[14px]"><path d="M12 0L24 14H0z" fill="#b5b5b5" /></svg>
      <span className="mt-[11px] leading-[48px] text-[#9a8c86]">专用设备</span>
      <Num className="mt-[11px] leading-[48px] text-[35px] tracking-[-0.02em] text-[#e5130f]">0.45%</Num>
    </div>
    {NAV_ITEMS.map(({ label, icon }) => (
      <div key={label} className="w-[207.700px] pt-[20px] flex flex-col items-center text-[32px] text-[#d8d8d8]">
        <svg viewBox="0 0 58 60" className="w-[58px] h-[60px]" fill="none" stroke="#d8d8d8" strokeWidth="2.800">
          {icon}
        </svg>
        <span className="mt-[1px] leading-[46px]">{label}</span>
      </div>
    ))}
    <i className="absolute left-[331px] bottom-[20px] w-[418px] h-[11px] rounded-full bg-[#aeaeae]" />
    <Watermark />
  </footer>
);

const Watermark: FC = () => (
  <div className="absolute right-0 bottom-0 w-[290px] h-[68px] text-white whitespace-nowrap">
    <i className="absolute left-[20px] top-[16px] w-[130px] h-[40px] rounded-full bg-[#1e1e1e] blur-[6px]" />
    <span className="absolute left-[75px] top-[6px] w-[37px] h-[28px] rounded-t-[9px] border-2 border-b-0 border-white bg-[#e31414] text-[6px] leading-[12px] text-center">
      爱股票
    </span>
    <i className="absolute left-[77px] top-[24px] w-[36px] h-[16px] rounded-[4px] bg-[#e31414] blur-[1px]" />
    <span className="absolute left-[123px] top-[7px] text-[33px] leading-[38px] tracking-[-0.01em]">爱股票APP</span>
    <i className="absolute left-[118px] top-[24px] w-[44px] h-[24px] rounded-full bg-[#242424] blur-[3px]" />
    <span className="absolute left-[163px] top-[25px] text-[28px] leading-[34px]">是</span>
    <span className="absolute left-[221px] top-[25px] text-[28px] leading-[34px]">般强</span>
    <span className="absolute left-[80px] top-[45px] text-[17px] leading-[20px] tracking-[0.19em]">www.aigupiao.com</span>
  </div>
);

/** Hand drawn arrow across both chart columns */
const TrendArrow: FC = () => (
  <svg
    viewBox="0 0 240 520"
    className="absolute left-[530px] top-[695px] w-[240px] h-[520px] pointer-events-none"
    fill="none"
    stroke="#f97b46"
    strokeWidth="10.500"
    strokeLinecap="round"
    strokeLinejoin="round"
  >
    <path d="M12 507C38 461 54 438 72 415C96 375 112 330 128 285C140 243 162 213 173 166C184 130 199 97 195 77" />
    <path d="M132 109C166 72 186 45 212 13Q219 6 221 20C224 62 222 72 231 105" />
  </svg>
);

const App: FC = () => (
  <main className="relative w-[1080px] h-[2400px] overflow-hidden bg-white [font-family:Roboto,'Noto_Sans_CJK_SC',sans-serif]">
    <header className="bg-[#f13037] text-white h-[226px]">
      <StatusBar />
      <TitleBar />
    </header>
    <QuotePanel />
    <NewsBar />
    <div className="h-[12px] bg-[#f4f4f4]" />
    <PeriodTabs />
    <ChartToolbar />
    <div className="h-[1327px] flex justify-between pl-[12px] pr-[12px]">
      <div className="w-[628px]">
        <MainChart />
        <DateAxis />
        <Indicators />
      </div>
      <ChipPanel />
    </div>
    <div className="h-[12px] bg-[#f4f4f4]" />
    <SectionTabs />
    <BottomBar />
    <TrendArrow />
  </main>
);

export default App;
